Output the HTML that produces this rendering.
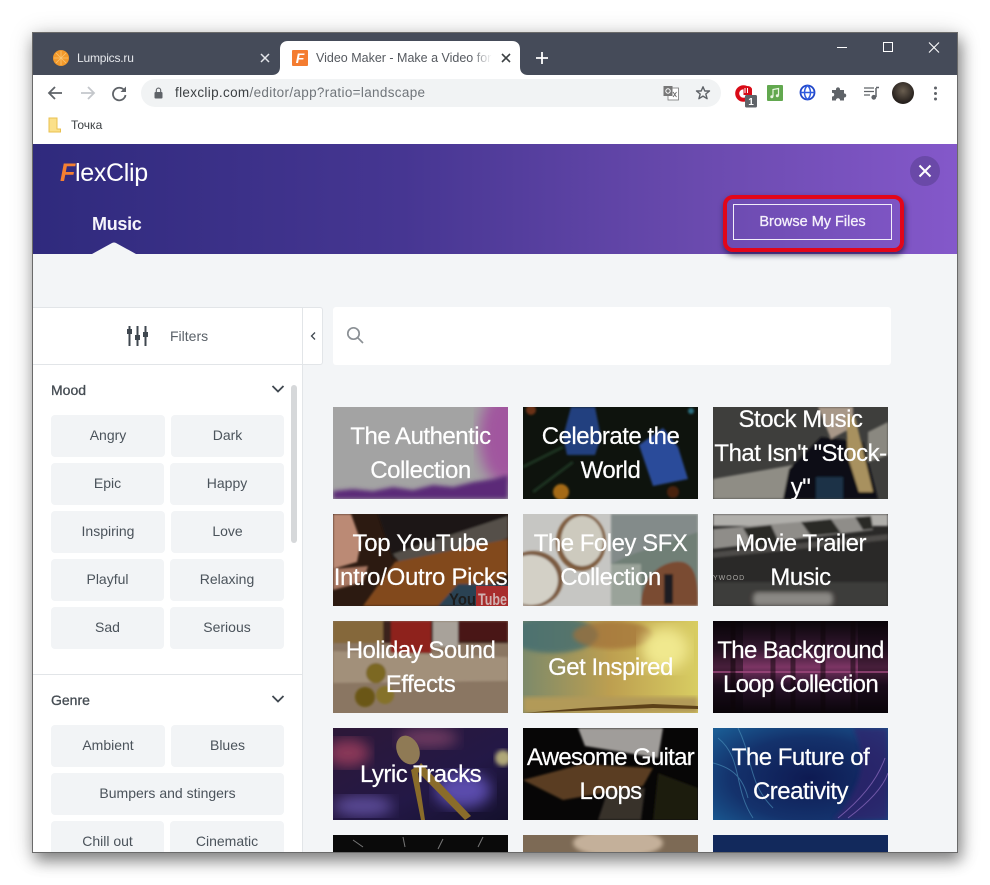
<!DOCTYPE html>
<html lang="en"><head><meta charset="utf-8"><title>FlexClip</title>
<style>
html,body{margin:0;padding:0;width:990px;height:885px;overflow:hidden;background:#fff;font-family:"Liberation Sans","Noto Sans CJK SC",sans-serif}
*{box-sizing:border-box}
.a{position:absolute}
#win{position:absolute;left:32px;top:32px;width:926px;height:821px;border:1px solid #6a6a6a;box-shadow:3px 8px 14px rgba(0,0,0,.42),0 2px 22px rgba(0,0,0,.18);background:#f3f5f7;overflow:hidden}
#c{position:absolute;left:-33px;top:-33px;width:990px;height:885px}
.btn{position:absolute;height:42px;background:#f2f4f6;border-radius:4px;color:#4b535b;font-size:14px;line-height:40px;text-align:center}
.card{position:absolute;width:175px;height:92px;overflow:hidden;background:#222}
.card svg{position:absolute;left:0;top:0}
.card div{position:absolute;left:-10px;right:-10px;top:1px;height:92px;display:flex;align-items:center;justify-content:center;text-align:center;color:#fff;font-size:24px;line-height:34px;letter-spacing:-.5px;-webkit-text-stroke:.2px #fff}
</style></head><body>
<div id="win"><div id="c">
<!-- title bar -->
<div class="a" style="left:33px;top:33px;width:924px;height:42px;background:#454b59"></div>
<svg class="a" style="left:53px;top:50px" width="16" height="16"><circle cx="8" cy="8" r="8" fill="#f39a2b"/><g stroke="#f9c574" stroke-width=".8"><path d="M8 1V15M1 8H15M3 3L13 13M13 3L3 13"/></g></svg>
<div class="a" style="left:77px;top:50px;font-size:12px;letter-spacing:-.2px;line-height:16px;color:#e6e8ec">Lumpics.ru</div>
<svg class="a" style="left:260px;top:53px" width="10" height="10"><path d="M1 1L9 9M9 1L1 9" stroke="#e4e6ea" stroke-width="1.5"/></svg>
<svg class="a" style="left:272px;top:41px" width="256" height="34"><path d="M0 34C5 34 8 31 8 26V8C8 3 11 0 16 0H240C245 0 248 3 248 8V26C248 31 251 34 256 34Z" fill="#fff"/></svg>
<div class="a" style="left:292px;top:50px;width:16px;height:16px;background:#f47c30;border-radius:1px;color:#fff;font:italic bold 14px/16px 'Liberation Sans',sans-serif;text-align:center">F</div>
<div class="a" style="left:316px;top:50px;width:176px;height:16px;font-size:12.500px;line-height:16px;color:#55595f;white-space:nowrap;overflow:hidden;-webkit-mask-image:linear-gradient(90deg,#000 88%,transparent 100%)">Video Maker - Make a Video for YouTube</div>
<svg class="a" style="left:501px;top:53px" width="10" height="10"><path d="M1 1L9 9M9 1L1 9" stroke="#3c4043" stroke-width="1.6"/></svg>
<svg class="a" style="left:535px;top:51px" width="14" height="14"><path d="M7 1V13M1 7H13" stroke="#fff" stroke-width="1.8"/></svg>
<svg class="a" style="left:835px;top:40px" width="110" height="16" fill="none" stroke="#fff"><path d="M2 7.500H12" stroke-width="1"/><rect x="48.500" y="2.500" width="9" height="9" stroke-width="1"/><path d="M94 2.500L104 12.500M104 2.500L94 12.500" stroke-width="1.100"/></svg>
<!-- toolbar -->
<div class="a" style="left:33px;top:75px;width:924px;height:69px;background:#fff"></div>
<svg class="a" style="left:46px;top:84px" width="90" height="18" fill="none"><path d="M16 9H3M9 3L3 9L9 15" stroke="#5f6368" stroke-width="1.800"/><path d="M35 9H48M42 3L48 9L42 15" stroke="#c4c7cb" stroke-width="1.800"/><path d="M78.500 6.500A6.300 6.300 0 1 0 79.500 11" stroke="#5f6368" stroke-width="1.800"/><path d="M80 2.500V8H74.500Z" fill="#5f6368"/></svg>
<div class="a" style="left:141px;top:79px;width:580px;height:28px;border-radius:14px;background:#f1f3f4"></div>
<svg class="a" style="left:154px;top:87px" width="10" height="12"><rect x="0.500" y="5" width="8" height="6.500" rx="1" fill="#5f6368"/><path d="M2.300 5.500V3.300A2.200 2.200 0 0 1 6.700 3.300V5.500" fill="none" stroke="#5f6368" stroke-width="1.100"/></svg>
<div class="a" style="left:175px;top:85px;font-size:13.500px;letter-spacing:.33px;line-height:16px;color:#70757a;white-space:nowrap"><span style="color:#3c4043">flexclip.com</span>/editor/app?ratio=landscape</div>
<svg class="a" style="left:663px;top:85px" width="16" height="16"><rect x="5" y="3" width="10.500" height="12" fill="#fff" stroke="#777" stroke-width=".8"/><rect x="0.500" y="1" width="9" height="10" fill="#777"/><circle cx="5" cy="6" r="2.200" fill="none" stroke="#fff" stroke-width="1"/><path d="M10 7L13.500 12M13.500 7L10 12" stroke="#666" stroke-width=".9"/></svg>
<svg class="a" style="left:695px;top:85px" width="16" height="16"><path d="M8 1.800L9.800 6H14.500L10.800 9L12.100 13.700L8 11.100L3.900 13.700L5.200 9L1.500 6H6.200Z" fill="none" stroke="#5f6368" stroke-width="1.400" stroke-linejoin="round"/></svg>
<svg class="a" style="left:734px;top:84px" width="24" height="26"><circle cx="9.500" cy="9.500" r="6.300" fill="none" stroke="#d90b17" stroke-width="4"/><path d="M9.500 3.500C12 1.500 17 1.500 18 5V11H9.500Z" fill="#d90b17"/><path d="M11 9V4M13.500 9V4" stroke="#fff" stroke-width="1"/><rect x="11" y="11" width="12" height="12.500" rx="1.500" fill="#5f6368"/><text x="17" y="21" font-family="Liberation Sans" font-weight="700" font-size="10" fill="#fff" text-anchor="middle">1</text></svg>
<svg class="a" style="left:767px;top:85px" width="16" height="16"><rect width="16" height="16" rx="1" fill="#62a84f"/><path d="M6 11.500V4.500L11.500 3.500V10.500" fill="none" stroke="#e9f5e2" stroke-width="1.200"/><circle cx="4.800" cy="11.700" r="1.500" fill="#e9f5e2"/><circle cx="10.300" cy="10.700" r="1.500" fill="#e9f5e2"/></svg>
<svg class="a" style="left:799px;top:84px" width="17" height="17"><circle cx="8.500" cy="8.500" r="7" fill="#fff" stroke="#2147c9" stroke-width="1.800"/><path d="M1.500 8.500H15.500M8.500 1.500C4.500 5 4.500 12 8.500 15.500C12.500 12 12.500 5 8.500 1.500Z" fill="none" stroke="#2f5be0" stroke-width="1.500"/></svg>
<svg class="a" style="left:831px;top:85px" width="16" height="16"><path d="M1 5H5C4.500 1.500 9.500 1.500 9 5H13V8.500C16 8 16 13 13 12.500V15.500H9C9.500 12.500 4.500 12.500 5 15.500H1V11.500C4 12 4 7 1 8Z" fill="#5f6368"/></svg>
<svg class="a" style="left:863px;top:85px" width="17" height="16"><path d="M1 3H11M1 6.500H11M1 10H7" stroke="#5f6368" stroke-width="1.300"/><path d="M13 3V12" stroke="#5f6368" stroke-width="1.500"/><path d="M13 2.500H16" stroke="#5f6368" stroke-width="1.500"/><circle cx="10.800" cy="12.300" r="2.400" fill="#5f6368"/></svg>
<div class="a" style="left:892px;top:82px;width:22px;height:22px;border-radius:50%;background:radial-gradient(circle at 50% 40%,#6a5e50,#2a2420 65%,#15110f)"></div>
<svg class="a" style="left:933px;top:86px" width="5" height="15" fill="#5f6368"><circle cx="2.500" cy="2" r="1.500"/><circle cx="2.500" cy="7.500" r="1.500"/><circle cx="2.500" cy="13" r="1.500"/></svg>
<svg class="a" style="left:48px;top:117px" width="14" height="16"><path d="M1 1H9V12L12.500 12V15H1Z" fill="#fbe08a" stroke="#e9c04f"/></svg>
<div class="a" style="left:71px;top:117px;font-size:12px;line-height:16px;color:#3c4043">Точка</div>
<!-- purple header -->
<div class="a" style="left:33px;top:144px;width:924px;height:110px;background:linear-gradient(90deg,#2f2a7d 0%,#463692 40%,#6a4aae 72%,#8458ca 100%)"></div>
<div class="a" style="left:60px;top:158px;font-size:25px;line-height:30px;color:#fff;white-space:nowrap;letter-spacing:-.3px"><span style="color:#f47f32;font-weight:700;font-style:italic">F</span>lexClip</div>
<div class="a" style="left:92px;top:213px;font-size:18px;line-height:22px;font-weight:700;color:#f6f4fb;letter-spacing:-.3px">Music</div>
<svg class="a" style="left:91px;top:241px" width="46" height="13"><path d="M1 13L21 2Q23 1 25 2L45 13Z" fill="#f3f5f7"/></svg>
<div class="a" style="left:910px;top:156px;width:30px;height:30px;border-radius:50%;background:#6a49a8"></div>
<svg class="a" style="left:918px;top:164px" width="14" height="14"><path d="M1.500 1.500L12.500 12.500M12.500 1.500L1.500 12.500" stroke="#fff" stroke-width="2"/></svg>
<div class="a" style="left:723px;top:195px;width:181px;height:57px;border:4px solid #e2061a;border-radius:10px;box-shadow:1px 3px 6px rgba(20,10,50,.65)"></div>
<div class="a" style="left:733px;top:204px;width:159px;height:36px;border:1px solid #f2eefa;color:#f4f0fb;font-size:14.500px;line-height:35px;text-align:center;-webkit-text-stroke:.3px #f4f0fb">Browse My Files</div>
<!-- filters -->
<div class="a" style="left:33px;top:307px;width:290px;height:58px;background:#fff;border:1px solid #e2e5e8;border-left:0;border-radius:0 3px 3px 0"></div>
<div class="a" style="left:302px;top:307px;width:1px;height:545px;background:#e2e5e8"></div>
<div class="a" style="left:33px;top:365px;width:269px;height:487px;background:#fff"></div>
<svg class="a" style="left:126px;top:325px" width="24" height="22" fill="#3f474f"><rect x="2.500" y="1" width="2" height="4"/><rect x="1" y="4" width="5" height="5"/><rect x="2.500" y="9" width="2" height="12"/><rect x="10.500" y="1" width="2" height="9"/><rect x="9" y="10" width="5" height="5"/><rect x="10.500" y="15" width="2" height="6"/><rect x="18.500" y="1" width="2" height="6"/><rect x="17" y="7" width="5" height="5"/><rect x="18.500" y="12" width="2" height="9"/></svg>
<div class="a" style="left:170px;top:327px;font-size:14px;line-height:18px;color:#5a6168">Filters</div>
<svg class="a" style="left:309px;top:331px" width="8" height="10"><path d="M6 1.500L2.500 5L6 8.500" fill="none" stroke="#3f474f" stroke-width="1.300"/></svg>
<div class="a" style="left:333px;top:307px;width:558px;height:58px;background:#fff;border-radius:3px"></div>
<svg class="a" style="left:346px;top:326px" width="19" height="19" fill="none" stroke="#8b9095" stroke-width="1.700"><circle cx="7.500" cy="7.500" r="5.700"/><path d="M11.700 11.700L17 17"/></svg>
<!-- Mood -->
<div class="a" style="left:51px;top:381px;font-size:14px;line-height:18px;color:#454c53;-webkit-text-stroke:.3px #454c53">Mood</div>
<svg class="a" style="left:271px;top:384px" width="14" height="10"><path d="M1.500 2L7 7.500L12.500 2" fill="none" stroke="#3f474f" stroke-width="1.800"/></svg>
<div class="a" style="left:291px;top:385px;width:6px;height:158px;border-radius:3px;background:#d6d8da"></div>
<div class="btn" style="left:51px;top:415px;width:114px">Angry</div>
<div class="btn" style="left:171px;top:415px;width:113px">Dark</div>
<div class="btn" style="left:51px;top:463px;width:113px">Epic</div>
<div class="btn" style="left:170px;top:463px;width:114px">Happy</div>
<div class="btn" style="left:51px;top:511px;width:114px">Inspiring</div>
<div class="btn" style="left:171px;top:511px;width:113px">Love</div>
<div class="btn" style="left:51px;top:559px;width:113px">Playful</div>
<div class="btn" style="left:170px;top:559px;width:114px">Relaxing</div>
<div class="btn" style="left:51px;top:607px;width:113px">Sad</div>
<div class="btn" style="left:170px;top:607px;width:114px">Serious</div>
<div class="a" style="left:33px;top:674px;width:269px;height:1px;background:#e2e5e8"></div>
<div class="a" style="left:51px;top:691px;font-size:14px;line-height:18px;color:#454c53;-webkit-text-stroke:.3px #454c53">Genre</div>
<svg class="a" style="left:271px;top:694px" width="14" height="10"><path d="M1.500 2L7 7.500L12.500 2" fill="none" stroke="#3f474f" stroke-width="1.800"/></svg>
<div class="btn" style="left:51px;top:725px;width:114px">Ambient</div>
<div class="btn" style="left:171px;top:725px;width:113px">Blues</div>
<div class="btn" style="left:51px;top:773px;width:233px">Bumpers and stingers</div>
<div class="btn" style="left:51px;top:821px;width:113px">Chill out</div>
<div class="btn" style="left:170px;top:821px;width:114px">Cinematic</div>

<!-- cards -->
<div class="card" style="left:333px;top:407px"><svg width="175" height="92"><defs><filter id="b1" x="-5%" y="-5%" width="110%" height="110%"><feGaussianBlur stdDeviation="1"/></filter><filter id="b3"><feGaussianBlur stdDeviation="2"/></filter><filter id="b6"><feGaussianBlur stdDeviation="7"/></filter></defs><rect width="175" height="92" fill="#a3a3a3"/><ellipse cx="172" cy="30" rx="26" ry="48" fill="#a1579f" filter="url(#b6)"/><path d="M0 92V84L20 82L40 84L60 80L80 83L100 78L120 80L140 75L160 72L175 68V92Z" fill="#5c2a78" filter="url(#b3)"/></svg><div>The Authentic<br>Collection</div></div>
<div class="card" style="left:523px;top:407px"><svg width="175" height="92"><rect width="175" height="92" fill="#0e130d"/><g filter="url(#b1)"><path d="M48 0H72L78 30L72 48H44L40 30Z" fill="#22407f"/><path d="M116 38L140 21L155 40L165 72L130 79Z" fill="#2b4c9a"/><circle cx="38" cy="85" r="8" fill="#a56a18"/><circle cx="8" cy="3" r="5" fill="#6a3012"/><circle cx="168" cy="4" r="3" fill="#2a6f80"/><circle cx="150" cy="85" r="6" fill="#4a2210"/><path d="M0 60L40 40M10 85L50 55" stroke="#1d3320" stroke-width="3"/></g></svg><div>Celebrate the<br>World</div></div>
<div class="card" style="left:713px;top:407px"><svg width="175" height="92"><rect width="175" height="92" fill="#3e3e3c"/><g filter="url(#b1)"><path d="M0 72L80 58L90 92H0Z" fill="#8f8d85"/><path d="M155 25L175 15V48L155 55Z" fill="#8a8880"/><path d="M70 92L76 62L108 30L150 35L165 92Z" fill="#101116"/><path d="M105 0H140V20L118 32Z" fill="#a89888"/><path d="M133 8L142 10L160 85H146L135 50Z" fill="#a8915f"/><path d="M103 70H130V92H103Z" fill="#1f3046"/></g></svg><div style="top:1px">Stock Music<br>That Isn't "Stock-<br>y"</div></div>

<div class="card" style="left:333px;top:514px"><svg width="175" height="92"><rect width="175" height="92" fill="#2c1a11"/><g filter="url(#b1)"><path d="M45 0H175V10L60 45Z" fill="#1b1613"/><path d="M60 40L175 2V24L75 60Z" fill="#54504a"/><path d="M30 92L62 48L175 25V60L120 92Z" fill="#82481f"/><path d="M0 0H18L28 28L24 48L0 55Z" fill="#bb8a74"/><path d="M0 55L35 52L30 68L0 76Z" fill="#a87762"/><path d="M105 92L125 70H175V92Z" fill="#2b4352"/></g><text x="116" y="91" font-family="Liberation Sans" font-weight="700" font-size="17" fill="#1d1d1d" textLength="27" lengthAdjust="spacingAndGlyphs">You</text><rect x="143" y="72" width="32" height="20" fill="#a82c2c"/><text x="145" y="91" font-family="Liberation Sans" font-weight="700" font-size="17" fill="#d0b0b0" textLength="29" lengthAdjust="spacingAndGlyphs">Tube</text></svg><div style="letter-spacing:-.3px">Top YouTube<br>Intro/Outro Picks</div></div>
<div class="card" style="left:523px;top:514px"><svg width="175" height="92"><rect width="175" height="92" fill="#c6c6c3"/><g filter="url(#b1)"><rect x="88" width="87" height="92" fill="#6f7f76"/><path d="M88 0H175V18L110 40L88 50Z" fill="#838b8a"/><rect x="88" y="50" width="30" height="42" fill="#9aa39a"/><ellipse cx="58" cy="28" rx="25" ry="29" fill="#7e5c3e"/><ellipse cx="59" cy="27" rx="21" ry="25" fill="#cdcabe"/><ellipse cx="10" cy="65" rx="30" ry="28" fill="#7a5a40"/><ellipse cx="8" cy="66" rx="27" ry="25" fill="#d3d0c6"/><path d="M118 92C118 62 140 45 160 48C175 52 175 75 175 92Z" fill="#7a4c30"/><rect x="141" y="60" width="9" height="30" fill="#1e1c20"/></g></svg><div>The Foley SFX<br>Collection</div></div>
<div class="card" style="left:713px;top:514px"><svg width="175" height="92"><rect width="175" height="92" fill="#2a2928"/><g filter="url(#b1)"><rect width="175" height="12" fill="#b0afab"/><path d="M0 15L158 2L160 16L0 35Z" fill="#8f8d89"/><path d="M30 14L58 11L66 28L40 31ZM88 8L118 5L128 19L98 22ZM142 3L158 2L160 15L150 16Z" fill="#2b2a28"/><path d="M0 38L175 20V26L0 44Z" fill="#4e4c48"/><rect y="68" width="175" height="24" fill="#3e3c3a"/><rect x="40" y="78" width="80" height="14" rx="5" fill="#8a8884" filter="url(#b3)"/></g><text x="0" y="66" font-family="Liberation Sans" font-size="7" fill="#a8a6a2" letter-spacing="1">YWOOD</text></svg><div>Movie Trailer<br>Music</div></div>

<div class="card" style="left:333px;top:621px"><svg width="175" height="92"><rect width="175" height="92" fill="#8a7662"/><g filter="url(#b1)"><rect width="175" height="22" fill="#3a241b"/><rect x="58" width="40" height="32" fill="#8e231e"/><rect x="0" width="50" height="22" fill="#85683a"/><rect x="125" width="50" height="20" fill="#4a1212"/><path d="M0 30L175 36V60L0 62Z" fill="#a2907a"/><rect y="0" x="100" width="25" height="26" fill="#a8a29a"/><circle cx="43" cy="52" r="10" fill="#7c6722"/><circle cx="34" cy="76" r="0" fill="#000"/><circle cx="32" cy="76" r="10" fill="#6a5719"/><circle cx="52" cy="74" r="9" fill="#85722a"/></g></svg><div>Holiday Sound<br>Effects</div></div>
<div class="card" style="left:523px;top:621px"><svg width="175" height="92"><defs><linearGradient id="s" x1="0" y1="0" x2="1" y2="0"><stop offset="0" stop-color="#7d8a6a"/><stop offset=".5" stop-color="#bd9f50"/><stop offset="1" stop-color="#d8cd62"/></linearGradient></defs><rect width="175" height="92" fill="url(#s)"/><ellipse cx="30" cy="14" rx="45" ry="18" fill="#3c6a72" opacity=".75" filter="url(#b3)"/><ellipse cx="90" cy="14" rx="40" ry="14" fill="#a26f38" opacity=".7" filter="url(#b3)"/><ellipse cx="142" cy="28" rx="24" ry="22" fill="#f0e88e" filter="url(#b6)"/><rect y="76" width="175" height="16" fill="#b29a58" filter="url(#b3)"/><path d="M0 92L60 87L130 83L175 85V88L130 87L0 92Z" fill="#5c4018"/></svg><div>Get Inspired</div></div>
<div class="card" style="left:713px;top:621px"><svg width="175" height="92"><defs><linearGradient id="w" x1="0" y1="0" x2="0" y2="1"><stop offset="0" stop-color="#0a060a"/><stop offset=".3" stop-color="#341730"/><stop offset=".5" stop-color="#7c3564"/><stop offset=".7" stop-color="#28122a"/><stop offset="1" stop-color="#0a050a"/></linearGradient></defs><rect width="175" height="92" fill="url(#w)"/><rect width="30" height="92" fill="#080408" opacity=".45"/><rect x="145" width="30" height="92" fill="#080408" opacity=".45"/><path d="M0 51H175" stroke="#a14a80" stroke-width="1.500"/><path d="M20 0V92M60 0V92M80 0V92M110 0V92M140 0V92" stroke="#0d0508" stroke-width="5" opacity=".5"/></svg><div style="letter-spacing:-.7px">The Background<br>Loop Collection</div></div>

<div class="card" style="left:333px;top:728px"><svg width="175" height="92"><defs><linearGradient id="p" x1="0" y1="0" x2="1" y2="1"><stop offset="0" stop-color="#2d1838"/><stop offset=".6" stop-color="#231846"/><stop offset="1" stop-color="#14102c"/></linearGradient></defs><rect width="175" height="92" fill="url(#p)"/><ellipse cx="15" cy="25" rx="22" ry="14" fill="#8a3858" filter="url(#b6)"/><ellipse cx="30" cy="78" rx="30" ry="10" fill="#5c4c98" filter="url(#b6)"/><ellipse cx="130" cy="62" rx="28" ry="18" fill="#5a4cac" filter="url(#b6)"/><ellipse cx="95" cy="10" rx="30" ry="10" fill="#6e3a60" filter="url(#b6)"/><circle cx="170" cy="30" r="8" fill="#b0a878" filter="url(#b3)"/><path d="M84 38L92 92H88L78 42Z" fill="#8a6c2a"/><path d="M88 35L138 88L132 92L83 42Z" fill="#8a6c2a"/><ellipse cx="75" cy="22" rx="11" ry="15" transform="rotate(-25 75 22)" fill="#8f7a55"/></svg><div>Lyric Tracks</div></div>
<div class="card" style="left:523px;top:728px"><svg width="175" height="92"><rect width="175" height="92" fill="#070606"/><g filter="url(#b1)"><path d="M55 0L140 0L135 30L62 18Z" fill="#a09d9a"/><path d="M0 52L60 36L130 40L120 58L40 72Z" fill="#5a3c22"/><path d="M75 92L85 62L122 60L118 92Z" fill="#39322c"/><path d="M135 45L175 60V92H130Z" fill="#1e1a10"/></g></svg><div style="letter-spacing:-.7px">Awesome Guitar<br>Loops</div></div>
<div class="card" style="left:713px;top:728px"><svg width="175" height="92"><defs><radialGradient id="f" cx=".55" cy=".55" r=".75"><stop offset="0" stop-color="#0e1a52"/><stop offset=".6" stop-color="#14326c"/><stop offset="1" stop-color="#1a5c94"/></radialGradient></defs><rect width="175" height="92" fill="url(#f)"/><path d="M120 92C150 60 155 30 140 0H175V92Z" fill="#32206c" opacity=".7" filter="url(#b3)"/><path d="M5 10C30 30 20 60 40 90M25 0C40 30 35 55 60 80M0 35C20 40 30 50 35 70" stroke="#4f95bd" stroke-width="1" fill="none" opacity=".6"/><path d="M125 90C150 70 165 50 172 30M135 90C155 75 170 60 175 45" stroke="#8f6cc0" stroke-width="1" fill="none" opacity=".7"/></svg><div>The Future of<br>Creativity</div></div>

<div class="card" style="left:333px;top:835px;background:#0a0a0a"><svg width="175" height="92"><path d="M20 5L30 12M70 2L72 12M110 4L105 14M150 2L145 12" stroke="#777" stroke-width="1"/></svg></div>
<div class="card" style="left:523px;top:835px;background:#7d6a55"><svg width="175" height="92"><ellipse cx="95" cy="8" rx="45" ry="14" fill="#c4b09a" filter="url(#b3)"/></svg></div>
<div class="card" style="left:713px;top:835px;background:#12295c"></div>
</div></div>
</body></html>
